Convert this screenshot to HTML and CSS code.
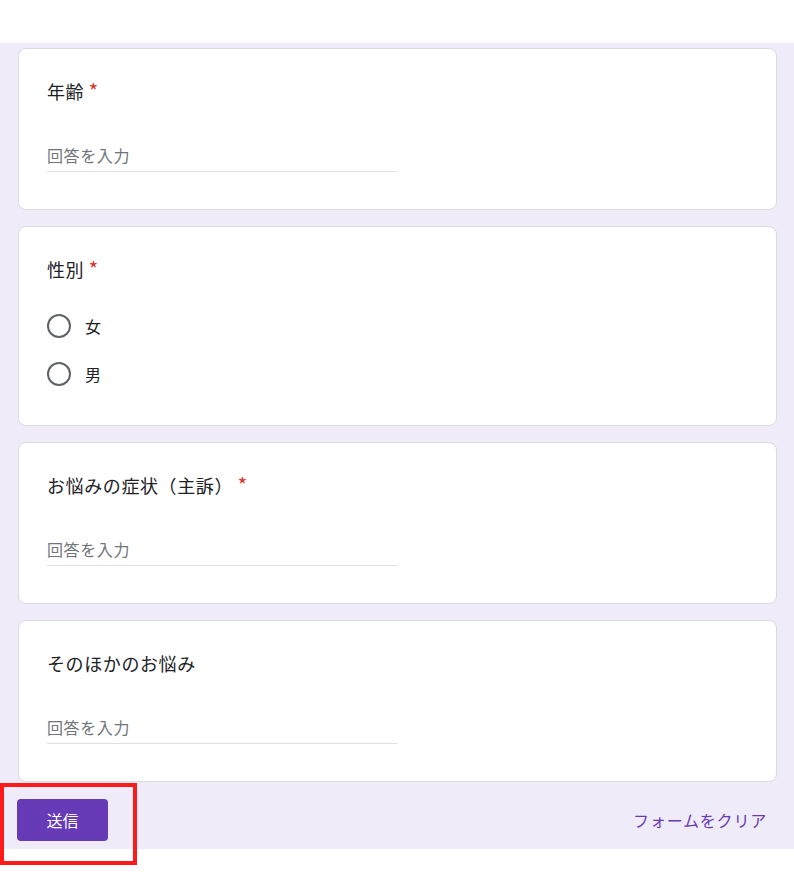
FILE: index.html
```html
<!DOCTYPE html>
<html lang="ja">
<head>
<meta charset="utf-8">
<title>フォーム</title>
<link rel="stylesheet" href="styles.css">
</head>
<body>
<div class="topbar"></div>
<main class="form">
  <section class="card">
    <div class="q-title">年齢 <span class="req">*</span></div>
    <div class="answer"><span class="placeholder">回答を入力</span></div>
  </section>
  <section class="card card--choice">
    <div class="q-title">性別 <span class="req">*</span></div>
    <div class="options">
      <label class="option"><span class="radio"></span><span class="option-label">女</span></label>
      <label class="option"><span class="radio"></span><span class="option-label">男</span></label>
    </div>
  </section>
  <section class="card">
    <div class="q-title">お悩みの症状（主訴） <span class="req">*</span></div>
    <div class="answer"><span class="placeholder">回答を入力</span></div>
  </section>
  <section class="card">
    <div class="q-title">そのほかのお悩み</div>
    <div class="answer"><span class="placeholder">回答を入力</span></div>
  </section>
  <div class="actions">
    <button class="submit" type="button">送信</button>
    <button class="clear" type="button">フォームをクリア</button>
  </div>
</main>
<div class="highlight"></div>
</body>
</html>
```
FILE: styles.css
```css
html, body {
  margin: 0;
  padding: 0;
  background: #ffffff;
}
body {
  font-family: "Noto Sans CJK JP", "Noto Sans", sans-serif;
  color: #202124;
  position: relative;
  min-height: 892px;
}
.topbar {
  height: 43px;
  background: #ffffff;
}
.form {
  background: #f0ebf8;
  padding: 5px 17px 8px 18px;
  display: flex;
  flex-direction: column;
  gap: 16px;
}
.card {
  background: #ffffff;
  border: 1px solid #dadce0;
  border-radius: 8px;
  padding: 30px 28px 37px 28px;
}
.card--choice {
  padding-bottom: 27px;
}
.q-title {
  font-size: 18px;
  line-height: 24px;
  font-weight: 400;
  letter-spacing: 0.6px;
  color: #202124;
}
.req {
  color: #d93025;
  font-size: 20px;
  letter-spacing: 0;
}
.answer {
  margin-top: 40px;
  width: 350px;
  border-bottom: 1px solid #e0e0e0;
  padding-bottom: 4px;
}
.placeholder {
  display: block;
  font-size: 16px;
  line-height: 24px;
  letter-spacing: 0.6px;
  color: #70757a;
}
.options {
  margin-top: 21px;
  display: flex;
  flex-direction: column;
}
.option {
  height: 48px;
  display: flex;
  align-items: center;
  gap: 14px;
}
.radio {
  width: 20px;
  height: 20px;
  border: 2.5px solid #5f6368;
  border-radius: 50%;
  box-sizing: content-box;
}
.option-label {
  font-size: 16px;
  line-height: 24px;
  color: #202124;
}
.actions {
  display: flex;
  justify-content: space-between;
  align-items: center;
  margin-left: -1px;
  margin-top: 1px;
}
.submit {
  width: 91px;
  height: 42px;
  border: none;
  border-radius: 4px;
  background: #673ab7;
  color: #ffffff;
  font-family: inherit;
  font-size: 16px;
  cursor: pointer;
}
.clear {
  background: none;
  border: none;
  padding: 0 10px 0 0;
  color: #673ab7;
  font-family: inherit;
  font-size: 16px;
  letter-spacing: 0.8px;
  cursor: pointer;
}
.highlight {
  position: absolute;
  left: 0;
  top: 783px;
  width: 137px;
  height: 82px;
  box-sizing: border-box;
  border: 4px solid #ff1a1a;
}
```
